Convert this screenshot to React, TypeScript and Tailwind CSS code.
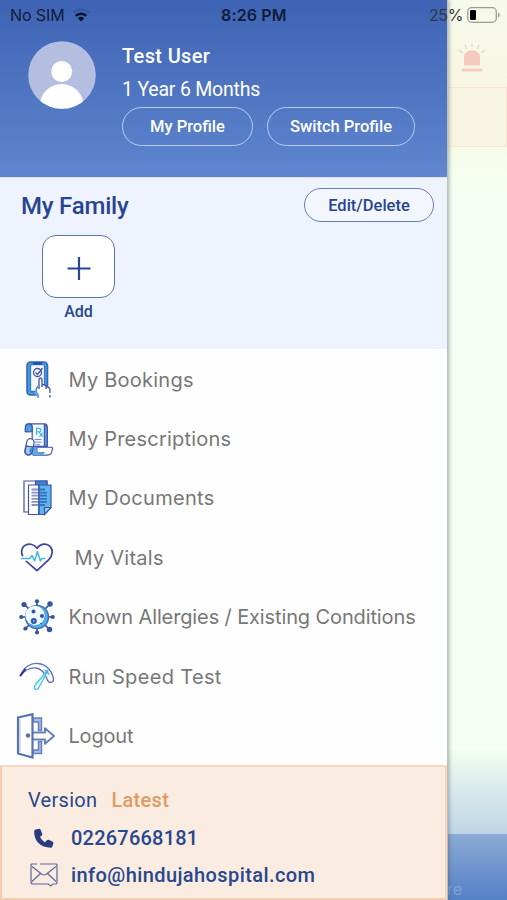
import type { ReactNode } from "react";
import { clsx } from "clsx";

const NAVY = "#4550a6";
const SKY = "#46aee6";

type MenuItem = {
  label: string;
  icon: ReactNode;
  labelClass: string;
};

const MENU: MenuItem[] = [
  { label: "My Bookings", icon: <BookingsIcon />, labelClass: "tracking-[0.24px]" },
  { label: "My Prescriptions", icon: <PrescriptionsIcon />, labelClass: "tracking-[0.22px]" },
  { label: "My Documents", icon: <DocumentsIcon />, labelClass: "tracking-[0.28px]" },
  { label: "My Vitals", icon: <VitalsIcon />, labelClass: "pl-[6px] tracking-[0.25px]" },
  { label: "Known Allergies / Existing Conditions", icon: <AllergiesIcon />, labelClass: "tracking-[-0.12px]" },
  { label: "Run Speed Test", icon: <SpeedIcon />, labelClass: "tracking-[0.33px]" },
  { label: "Logout", icon: <LogoutIcon />, labelClass: "tracking-[-0.2px]" },
];

export default function App() {
  return (
    <div className="relative flex h-[900px] w-[507px] overflow-hidden bg-white font-['Roboto',sans-serif]">
      <aside className="z-10 flex w-[448px] shrink-0 flex-col border-r border-[#b9c3c4] bg-[#fefefe] shadow-[1px_0_4px_rgba(60,80,90,0.45)]">
        <ProfileHeader />
        <FamilySection />
        <nav className="flex h-[416px] shrink-0 flex-col pt-[1px]">
          {MENU.map((item) => (
            <MenuRow key={item.label} {...item} />
          ))}
        </nav>
        <ContactFooter />
      </aside>
      <PageBehind />
      <StatusBar />
    </div>
  );
}

function StatusBar() {
  return (
    <div className="absolute inset-x-0 top-0 z-20 flex h-[30px] items-center pl-[10px] pr-[7px] font-['Inter',sans-serif] text-[16px] text-[#101c38]">
      <span className="w-[55px] whitespace-nowrap tracking-[-0.1px]">No SIM</span>
      <svg viewBox="0 0 18 14" className="ml-[7px] h-[14px] w-[18px]" fill="none">
        <path d="M1 4.6a11.5 11.5 0 0 1 16 0" stroke="#3559a6" strokeWidth="2.2" />
        <path d="M3.7 7.8a7.6 7.6 0 0 1 10.6 0" stroke="#07122b" strokeWidth="2.5" />
        <path d="M9 13.4 5.9 10.3a4.5 4.5 0 0 1 6.2 0Z" fill="#07122b" />
      </svg>
      <span className="ml-[131px] w-[68px] whitespace-nowrap font-semibold tracking-[0.15px]">8:26 PM</span>
      <span className="ml-auto whitespace-nowrap tracking-[-0.4px] text-[#303a3c]">25%</span>
      <svg viewBox="0 0 33 16" className="ml-[4px] h-[16px] w-[33px]" fill="none">
        <rect x="0.7" y="0.7" width="28.6" height="14.6" rx="4" stroke="#999d91" strokeWidth="1.3" />
        <rect x="3" y="3" width="6" height="10" rx="1.3" fill="#000" />
        <path d="M31 5.5q1.8.8 1.8 2.5T31 10.500z" fill="#999d91" />
      </svg>
    </div>
  );
}

function ProfileHeader() {
  return (
    <header className="flex h-[177px] shrink-0 bg-linear-to-b from-[#3f63b4] to-[#5f86cf] pl-[28px] pt-[41px] text-white">
      <svg viewBox="0 0 68 68" className="size-[68px] shrink-0">
        <clipPath id="avatar">
          <circle cx="34" cy="34" r="33.8" />
        </clipPath>
        <g clipPath="url(#avatar)">
          <rect width="68" height="68" fill="#b3bee0" />
          <circle cx="33.700" cy="30.500" r="10.500" fill="#fff" />
          <ellipse cx="33.700" cy="65" rx="22" ry="22" fill="#fff" />
        </g>
      </svg>
      <div className="ml-[26px] flex flex-col">
        <div className="h-[31px] text-[20px] font-medium leading-[30px] tracking-[0.35px]">Test User</div>
        <div className="h-[35px] whitespace-nowrap text-[19.5px] leading-[35px] tracking-[-0.2px]">
          1 Year 6 Months
        </div>
        <div className="flex gap-[14px]">
          <PillButton className="h-[39px] w-[131px] border-[#b9cdf5] text-white">My Profile</PillButton>
          <PillButton className="h-[39px] w-[148px] border-[#b9cdf5] text-white">Switch Profile</PillButton>
        </div>
      </div>
    </header>
  );
}

function PillButton({ className, children }: { className?: string; children: ReactNode }) {
  return (
    <button
      type="button"
      className={clsx(
        "flex shrink-0 items-center justify-center whitespace-nowrap rounded-full border-[1.5px] pt-[2px] text-[16.5px] font-medium",
        className,
      )}
    >
      {children}
    </button>
  );
}

function FamilySection() {
  return (
    <section className="h-[172px] shrink-0 border-t border-[#dce4f5] bg-[#eff3fe] pl-[21px] pr-[13px] pt-[10px] text-[#26468f]">
      <div className="flex items-center justify-between">
        <h2 className="pt-[2px] text-[24px] font-medium leading-[32px] tracking-[-0.2px]">My Family</h2>
        <PillButton className="h-[34px] w-[130px] border-[#6580b9] bg-[#f3f6ff]">Edit/Delete</PillButton>
      </div>
      <div className="ml-[21px] mt-[13px] flex w-[73px] flex-col items-center">
        <button
          type="button"
          aria-label="Add family member"
          className="flex h-[63px] w-[73px] items-center justify-center rounded-[14px] border border-[#5b74ae] bg-white"
        >
          <svg viewBox="0 0 24 24" className="size-[24px] translate-y-[1.5px]">
            <path d="M12 0.500v23M0.500 12h23" stroke="#26468f" strokeWidth="2.200" />
          </svg>
        </button>
        <span className="mt-[3px] text-[16px] font-medium leading-[22px]">Add</span>
      </div>
    </section>
  );
}

function MenuRow({ label, icon, labelClass }: MenuItem) {
  return (
    <a className="flex h-[59.4px] shrink-0 items-center pl-[15px]">
      <span className="flex w-[44px] shrink-0 items-center justify-center">{icon}</span>
      <span
        className={clsx(
          "ml-[9.500px] whitespace-nowrap font-['Inter',sans-serif] text-[20px] text-[#777778]",
          labelClass,
        )}
      >
        {label}
      </span>
    </a>
  );
}

function BookingsIcon() {
  return (
    <svg viewBox="0 0 26 38" className="ml-[3px] h-[38px] w-[26px]" fill="none" stroke={NAVY} strokeWidth="1.3">
      <rect x="1" y="1" width="20.500" height="33" rx="3.500" fill="#429ddf" stroke="#3266b8" strokeWidth="1.600" />
      <rect x="4.500" y="3.500" width="14" height="27" rx="1" fill="#f5f9ff" stroke="#3d78c8" />
      <path d="M7 2.500h9" stroke="#1d4a9f" strokeWidth="2" />
      <circle cx="11.500" cy="11.500" r="4" />
      <path d="m9.500 11.500 2 2 5-6.500" />
      <path d="M13 27v-8q0-2 1.500-2t1.500 2v6q3-1 4 1 3-.5 4 2.500V37H12q0-2-2-4-1.500-3 0-5Z" fill="#fff" stroke="none" />
      <path d="M13 28v-9q0-2 1.500-2t1.500 2v7m0-2q3-1 4 1v3m0-2q3-.5 4 2.500V32m0 2v2.500" />
      <path d="M13 25q-3 1.500-3 5 .5 2 2 3.500V37" stroke="#4d8fd6" strokeWidth="1.500" />
    </svg>
  );
}

function PrescriptionsIcon() {
  return (
    <svg viewBox="0 0 30 36" className="ml-[3px] h-[35px] w-[30px]" fill="none" stroke={NAVY} strokeWidth="1.200">
      <path d="M6 2h15q2.500 0 2.500 4v19H8V6q0-4-3-4-4 0-4 4.500V10h5" fill="#eefaff" />
      <path d="M1 9V6q0-4 3.500-4T8 6v4H1ZM20.500 3h1q2 1 2 4v18h-3Z" fill="#4a9de0" />
      <path d="M12.500 13V6.500H15q2 0 2 1.800T15 10h-2.500m2 0 4.500 5m0-4L15.500 15" stroke={SKY} />
      <path d="M10.500 18h7M10.500 20.700h7M11 23.400h5" stroke="#7c86c3" strokeWidth="1" />
      <path d="M13 26h15.300q.7 0 .4 2.500-.7 5.500-4.700 5.500H9q-2-1-1-4t5-4Z" fill="#fff" />
      <path d="M9 26h4v5q4 2 7 0v3H8Z" fill="#55aee8" stroke="none" />
      <path d="M13 26v4q0 1.500 2 1.500h6" stroke="#6472b8" strokeWidth="1" />
      <rect x="1.500" y="17" width="7.500" height="17" rx="3.700" transform="rotate(12 5 25)" fill="#fff" />
      <path d="m1.800 24.500 7.200 1.500-1.200 5q-1.800 3.500-5 2.500-2.500-1-2-4Z" fill="#8fd0f4" />
      <path d="m7 27-1.200 4" stroke="#3d82d0" strokeWidth="2" />
    </svg>
  );
}

function DocumentsIcon() {
  return (
    <svg viewBox="0 0 29 36" className="h-[36px] w-[29px]" fill="none" stroke={NAVY} strokeWidth="1.200">
      <path d="M1 1h23v31H1z" fill="#fff" />
      <path d="M12.500 1H24v5H12.500z" fill="#328bd2" />
      <path d="M5.500 5H16v29.500H5.500z" fill="#fff" />
      <path d="M16 5h12v22.500l-6.500 7H16z" fill="#58b7ee" />
      <path d="M21.500 34.500v-7H28z" fill="#8bd2f6" />
      <path
        d="M8.500 9.500H15M8.500 12.600H15M8.500 15.700H15M8.500 18.800H15M8.500 21.900H15M8.500 25H15"
        stroke="#8b90c6"
        strokeWidth="1.800"
      />
      <path
        d="M16 9.500h6M16 12.600h8M16 15.700h8M16 18.800h8M16 21.900h8M16 25h6"
        stroke="#3b6dba"
        strokeWidth="1.800"
      />
      <path d="M16 5v29.500" stroke="#3d62b1" strokeWidth="1" />
    </svg>
  );
}

function VitalsIcon() {
  return (
    <svg viewBox="0 0 34 30" className="h-[29px] w-[34px]" fill="none" strokeLinecap="round" strokeLinejoin="round">
      <path
        d="M2 13Q-.5 7 3.500 3.200C8-.5 14 1 17 5.500 20.500.5 27-.3 30.800 3.800 34 7.500 33 13 29.500 17L17 28.500 6 19"
        stroke="#4148a0"
        strokeWidth="1.800"
      />
      <path d="M1 16h8.500l2.500-3 2.500 5.500 3-9.500 3 9.500 1.500-2.500H25" stroke="#44b6e5" strokeWidth="1.600" />
    </svg>
  );
}

function AllergiesIcon() {
  return (
    <svg viewBox="0 0 36 36" className="size-[36px]">
      <path
        d="M18 2v32M2 18h32M5 5l26 26M31 5 5 31"
        stroke="#35509e"
        strokeWidth="1.700"
      />
      <circle cx="18" cy="18" r="11.500" fill="#4faee9" stroke="#4a68b4" strokeWidth="1.400" />
      <circle cx="16" cy="16.500" r="9.700" fill="#effaff" />
      <g fill="#33559f">
        <circle cx="18" cy="2.300" r="2.100" />
        <circle cx="18" cy="33.500" r="2.100" />
        <circle cx="2.300" cy="18" r="2.100" />
        <circle cx="33.700" cy="18" r="2.100" />
        <circle cx="5" cy="5.500" r="2.600" />
        <circle cx="31" cy="5" r="2.700" />
        <circle cx="6.500" cy="29.500" r="2.100" />
        <circle cx="30.500" cy="30.500" r="2.700" />
        <circle cx="14.500" cy="12.500" r="2" />
        <circle cx="23" cy="17" r="2.100" />
        <circle cx="14.800" cy="22" r="3" />
        <circle cx="22" cy="24.500" r="0.800" />
      </g>
      <circle cx="14.800" cy="22" r="0.900" fill="#78bced" />
    </svg>
  );
}

function SpeedIcon() {
  return (
    <svg viewBox="0 0 36 30" className="h-[30px] w-[36px]" fill="none" strokeLinecap="round" strokeLinejoin="round">
      <path
        d="M1.500 13.500C5 4 13 1 19 1.500c8 .5 14 7 15.500 15.500.5 4-5 4.500-6 1C26 11.500 23 6.500 17 6 11 5.500 6 8 1.500 13.500Z"
        fill="#fbfcff"
        stroke="#6672ba"
        strokeWidth="1.300"
      />
      <path d="m1.500 13.500 4.500-6" stroke="#2a3295" strokeWidth="2" />
      <path d="M29.500 7.500 16.500 22.500q-2 3.500-.2 4.700t3.700-2L29.500 7.500Z" fill="#eaffff" stroke="#41c5e5" strokeWidth="1.300" />
      <path d="m26 8 4 4" stroke="#4aa6de" strokeWidth="1.200" />
    </svg>
  );
}

function LogoutIcon() {
  return (
    <svg viewBox="0 0 40 46" className="-ml-[2px] h-[46px] w-[40px]" fill="none" stroke="#5672b0" strokeWidth="2">
      <path d="M17 5h8.500v12.500h-3V9H17ZM17 40.500h8.500V28.500h-3V37H17Z" fill="#a9bbdf" stroke="#6582be" strokeWidth="1.500" />
      <path d="M17 19.500h12V15.200l9 7.800-9 7.800V26.500H17" fill="#fff" stroke="#6681ba" strokeLinejoin="round" />
      <path d="M2 4.500 16.500 1.200v43.300L2 40.500Z" fill="#fff" stroke="#5672b0" strokeWidth="2.200" />
      <path d="M4 6v33" stroke="#b1bfdc" strokeWidth="1" />
      <circle cx="12" cy="22.500" r="2.200" fill="#5a6fae" stroke="none" />
    </svg>
  );
}

function ContactFooter() {
  return (
    <footer className="flex h-[135px] shrink-0 flex-col border-2 border-[#f7cdb0] border-t-[#f6d6c5] border-r-[#f8d3b5] bg-[#fbece1] pl-[26px] pt-[15px] text-[20px] text-[#27478f]">
      <div className="flex h-[36px] items-center gap-[14px]">
        <span className="tracking-[0.3px]">Version</span>
        <span className="font-medium tracking-[0.3px] text-[#df9b66]">Latest</span>
      </div>
      <div className="flex h-[40px] items-center font-medium">
        <svg viewBox="0 0 22 22" className="ml-[5px] mr-[17px] size-[21px]" fill="#293c7f">
          <path d="M3 1.500 6.500.8q1.200 0 1.600 1.200l1.600 4q.4 1-.5 1.800L7.300 9.500q1.800 3.700 5.300 5.300l1.900-2q.8-.8 1.800-.4l4 1.700q1.200.5 1 1.700l-.9 3.700q-.4 1.300-1.700 1.300Q10.300 20.500 5.700 15.800 1.200 11 1.200 3.300 1.300 1.800 3 1.500Z" />
        </svg>
        <span className="tracking-[0.22px]">02267668181</span>
      </div>
      <div className="flex h-[34px] items-center font-medium">
        <svg
          viewBox="0 0 28 24"
          className="ml-[2px] mr-[13px] h-[24px] w-[28px]"
          fill="none"
          stroke="#5b68a3"
          strokeWidth="1.200"
          strokeLinejoin="round"
        >
          <path d="M7 1H2Q1 1 1 2v17q0 2 2 2h15l3 2 1.500-2H26q1 0 1-2V2q0-1-1-1H10" />
          <path d="m2 3.500 9.500 7.500q2.500 2 5 0L26 3.500M2 18.500l8.500-8M26 18.500l-8.500-8" />
        </svg>
        <span className="tracking-[0.41px]">info@hindujahospital.com</span>
      </div>
    </footer>
  );
}

// The dimmed home screen that stays visible to the right of the drawer.
function PageBehind() {
  return (
    <main className="flex min-w-0 flex-1 flex-col bg-[#f5fff3]">
      <div className="flex h-[87px] items-start bg-linear-to-b from-[#f7faeb] to-[#f8f6e3] pl-[9px] pt-[43px]">
        <svg viewBox="0 0 30 30" className="size-[30px]">
          <path d="M7 22.500V13q1-5.500 8-5.500t8 5.500v9.500Z" fill="#f5cbc0" />
          <rect x="4.500" y="25.500" width="21" height="3" rx="1" fill="#f5cbc0" />
          <path d="M15 1v3M8 2l2 4M22 2l-2 4M2 7l4 3M28 7l-4 3" stroke="#dfdccb" strokeWidth="1.500" />
        </svg>
      </div>
      <div className="h-[60px] border border-l-0 border-[#f7e6d0] bg-[#f8f4e2]" />
      <div className="h-[50px] bg-linear-to-b from-[#f7fce9] to-[#f5fff3]" />
      <div className="flex-1" />
      <div className="h-[84px] bg-linear-to-b from-[#f3fdf1] to-[#bdd5e5]" />
      <div className="h-[66px] bg-linear-to-b from-[#8cabd6] to-[#5480c5] pt-[45px] font-['Inter',sans-serif] text-[16px] leading-[20px] text-[#80a3d8]">
        <span className="-ml-[1px]">re</span>
      </div>
    </main>
  );
}
